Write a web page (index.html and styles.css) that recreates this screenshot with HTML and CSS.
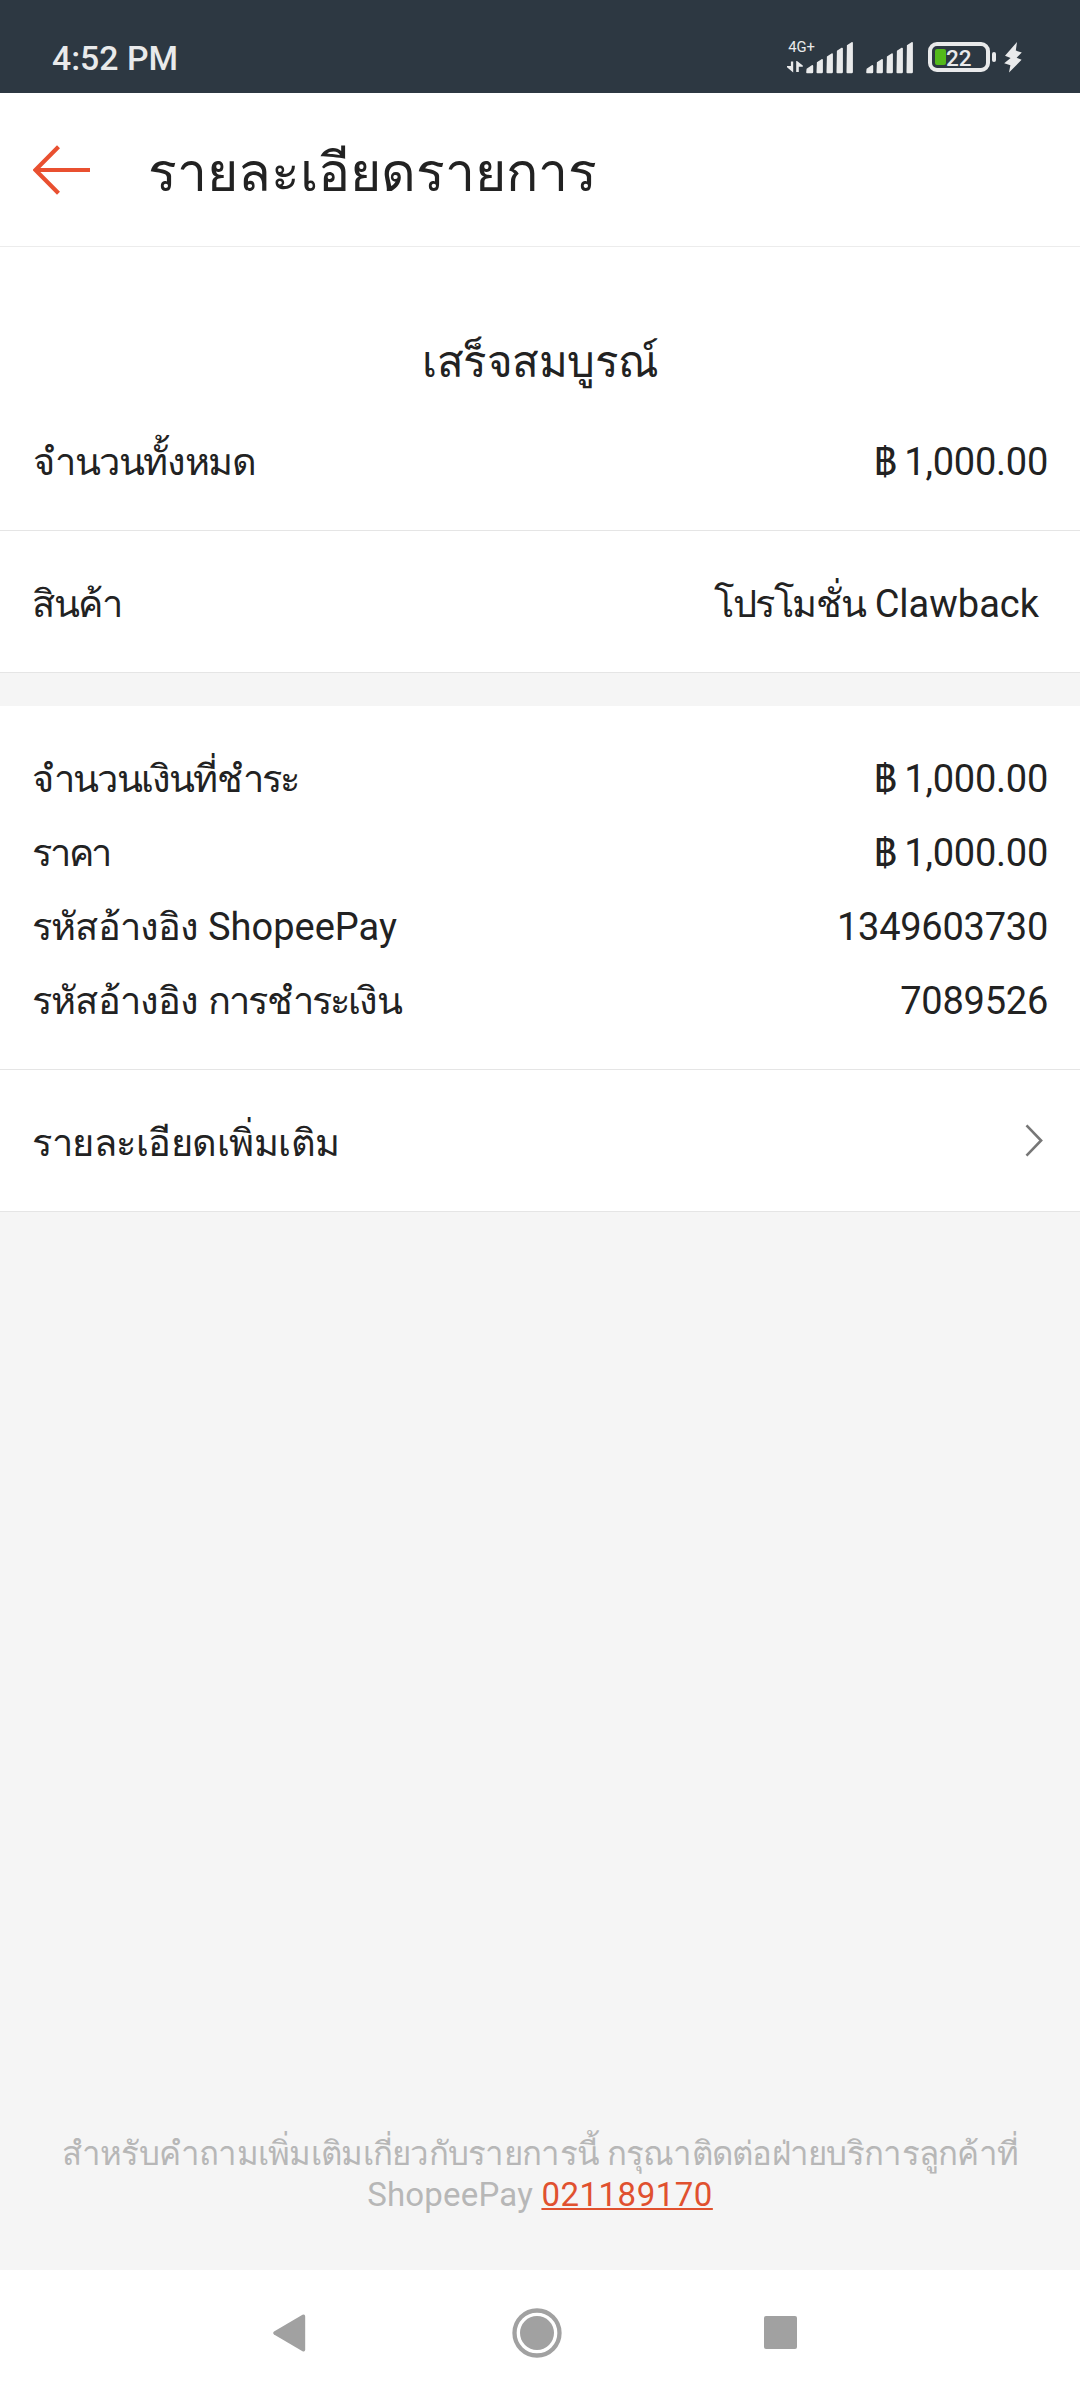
FILE: index.html
```html
<!DOCTYPE html>
<html lang="th">
<head>
<meta charset="utf-8">
<title>รายละเอียดรายการ</title>
<link rel="stylesheet" href="styles.css">
</head>
<body>
<div class="screen">
  <div class="statusbar">
    <span class="clock">4:52 PM</span>
    <div class="indicators">
      <svg class="network" width="68" height="38" viewBox="0 0 68 38">
        <text x="1.2" y="14.2">4G+</text>
        <path d="M3.9 23.4h2.3v11L0 29.2V28h3.9zM9.2 34V23h.8l5.8 4.6v1.2h-4V34z"/>
        <path d="M19.6 30.8l5.2-3.6q1.4-.4 1.4.8v6q0 1.2-1.2 1.2h-5q-.8 0-.8-1zM29.9 24.2l4.6-3q1.4-.4 1.4.8v12q0 1.2-1.2 1.2h-4.4q-.8 0-.8-1zM39.9 18.4l4.6-3q1.4-.4 1.4.8V34q0 1.2-1.2 1.2h-4.4q-.8 0-.8-1zM49.9 12.8l4.6-3q1.4-.4 1.4.8V34q0 1.2-1.2 1.2h-4.4q-.8 0-.8-1zM59.9 7.2l4.6-3q1.4-.4 1.4.8v29q0 1.2-1.2 1.2h-4.4q-.8 0-.8-1z"/>
      </svg>
      <svg class="signal" width="48" height="38" viewBox="19 0 48 38">
        <path d="M19.6 30.8l5.2-3.6q1.4-.4 1.4.8v6q0 1.2-1.2 1.2h-5q-.8 0-.8-1zM29.9 24.2l4.6-3q1.4-.4 1.4.8v12q0 1.2-1.2 1.2h-4.4q-.8 0-.8-1zM39.9 18.4l4.6-3q1.4-.4 1.4.8V34q0 1.2-1.2 1.2h-4.4q-.8 0-.8-1zM49.9 12.8l4.6-3q1.4-.4 1.4.8V34q0 1.2-1.2 1.2h-4.4q-.8 0-.8-1zM59.9 7.2l4.6-3q1.4-.4 1.4.8v29q0 1.2-1.2 1.2h-4.4q-.8 0-.8-1z"/>
      </svg>
      <div class="battery">
        <span class="charge"></span><span class="percent">22</span>
      </div>
      <span class="nub"></span>
      <svg class="bolt" width="18" height="31" viewBox="0 0 18 31">
        <path d="M13 0L1 13.8l5.6 2.2L.2 21.2l6.2 2L5 30.6 17.6 17.8l-5-2 5.2-5.2-6-2z"/>
      </svg>
    </div>
  </div>

  <header class="header">
    <svg class="back" width="58" height="50" viewBox="0 0 58 50">
      <path d="M57 25H3M25.5 1.8L2.4 25l23.1 23.2"/>
    </svg>
    <h1>รายละเอียดรายการ</h1>
  </header>

  <main>
    <section class="summary">
      <p class="state">เสร็จสมบูรณ์</p>
      <div class="row">
        <span class="ls-14">จำนวนทั้งหมด</span>
        <span class="num"><span class="baht">฿ </span>1,000.00</span>
      </div>
    </section>
    <section class="single">
      <span class="ls-14">สินค้า</span>
      <span class="product"><span class="ls-14">โปรโมชั่น</span> Clawback</span>
    </section>
    <section class="details">
      <div class="row">
        <span class="ls-18">จำนวนเงินที่ชำระ</span>
        <span class="num"><span class="baht">฿ </span>1,000.00</span>
      </div>
      <div class="row">
        <span class="ls-22">ราคา</span>
        <span class="num"><span class="baht">฿ </span>1,000.00</span>
      </div>
      <div class="row">
        <span><span class="ls-8">รหัสอ้างอิง</span> ShopeePay</span>
        <span class="num">1349603730</span>
      </div>
      <div class="row">
        <span><span class="ls-8">รหัสอ้างอิง</span> <span class="ls-18">การชำระเงิน</span></span>
        <span class="num">7089526</span>
      </div>
    </section>
    <section class="single">
      <span class="ls-5">รายละเอียดเพิ่มเติม</span>
      <svg class="chevron" width="18" height="33" viewBox="0 0 18 33">
        <path d="M1.5 1.4l14.6 15.1L1.5 31.6"/>
      </svg>
    </section>
  </main>

  <footer class="help">
    <span class="help-th">สำหรับคำถามเพิ่มเติมเกี่ยวกับรายการนี้ กรุณาติดต่อฝ่ายบริการลูกค้าที่</span><br>
    ShopeePay <a class="phone" href="tel:021189170">021189170</a>
  </footer>

  <nav class="navbar">
    <svg width="33" height="38" viewBox="0 0 33 38"><path d="M1 17.4L29.5.7q2.7-1 2.7 2v32.6q0 3-2.7 2L1 20.6q-1.6-1.6 0-3.2z"/></svg>
    <svg width="50" height="50" viewBox="0 0 50 50"><circle class="ring" cx="25" cy="25" r="22.5"/><circle cx="25" cy="25" r="17"/></svg>
    <svg width="33" height="33" viewBox="0 0 33 33"><rect width="33" height="33" rx="2"/></svg>
  </nav>
</div>
</body>
</html>
```
FILE: styles.css
```css
* { box-sizing: border-box; }

body {
  margin: 0;
  background: #f5f5f5;
  color: #222;
  font-family: Roboto, sans-serif;
  font-size: 38px;
}

h1, p { margin: 0; font-weight: 400; }
svg { display: block; flex: none; }

.screen {
  display: flex;
  flex-direction: column;
  width: 1080px;
  height: 2400px;
}

/* System status bar */
.statusbar {
  display: flex;
  justify-content: space-between;
  align-items: flex-start;
  flex: none;
  height: 93px;
  padding: 38px 58px 0 52px;
  background: #2d3842;
  color: #e9eaeb;
}

.clock { font-size: 33.8px; font-weight: 500; line-height: 41px; }

.indicators { display: flex; align-items: flex-start; }
.indicators svg { fill: #e9eaeb; }
.network text { font-size: 14.8px; }
.signal { margin-left: 11px; }

.battery {
  display: flex;
  align-items: center;
  width: 62px;
  height: 30px;
  margin: 4px 2px 0 14px;
  padding-left: 3px;
  border: 4px solid #e9eaeb;
  border-radius: 9px;
}

.charge { width: 11px; height: 16px; border-radius: 2px; background: #53b91b; }
.percent { font-size: 22.5px; font-weight: 500; line-height: 22px; padding-top: 2px; }
.nub { width: 4px; height: 10px; margin: 14px 8px 0 0; border-radius: 2px; background: #e9eaeb; }
.bolt { margin-top: 4px; }

/* Title bar */
.header {
  display: flex;
  align-items: center;
  flex: none;
  gap: 57px;
  height: 154px;
  padding-left: 33px;
  background: #fff;
  border-bottom: 1px solid #ececec;
}

.header h1 { font-size: 53.6px; line-height: 80px; padding-top: 7px; }
.back path { fill: none; stroke: #e95030; stroke-width: 4.2; }

/* Transaction sections */
main { flex: 1; }

section { background: #fff; border-bottom: 1px solid #e5e5e5; }

.summary { padding: 85px 32px 31px 33px; }
.state { margin-bottom: 33px; font-size: 43.8px; line-height: 60px; letter-spacing: -.5px; text-align: center; }

.row { display: flex; justify-content: space-between; line-height: 74px; }

.single {
  display: flex;
  justify-content: space-between;
  align-items: center;
  height: 142px;
  padding: 5px 32px 0 32px;
  line-height: 74px;
}

.product { margin-right: 9px; }
.details { margin-top: 33px; padding: 36px 32px 31px 32px; }

.num { letter-spacing: -.25px; }
.baht { letter-spacing: -1.2px; }
.ls-5 { letter-spacing: -.5px; }
.ls-8 { letter-spacing: -.8px; }
.ls-14 { letter-spacing: -1.4px; }
.ls-18 { letter-spacing: -1.8px; }
.ls-22 { letter-spacing: -2.2px; }

.chevron { margin: 0 5px 5px 0; }
.chevron path { fill: none; stroke: #777; stroke-width: 2.6; }

/* Support note */
.help {
  flex: none;
  padding-bottom: 55px;
  color: #b7b7b7;
  font-size: 33px;
  line-height: 41px;
  letter-spacing: .2px;
  text-align: center;
  white-space: nowrap;
}

.help-th { letter-spacing: -.73px; }

.phone {
  color: #e0512f;
  letter-spacing: .5px;
  text-decoration-thickness: 2px;
  text-underline-offset: 2px;
  text-decoration-skip-ink: none;
}

/* System navigation */
.navbar {
  display: flex;
  align-items: center;
  flex: none;
  height: 130px;
  padding: 0 0 5px 273px;
  background: #fff;
}

.navbar svg { fill: #a1a1a1; }
.navbar svg:nth-child(2) { margin: 0 202px 0 206px; }
.ring { fill: none; stroke: #a1a1a1; stroke-width: 4.3; }
```
